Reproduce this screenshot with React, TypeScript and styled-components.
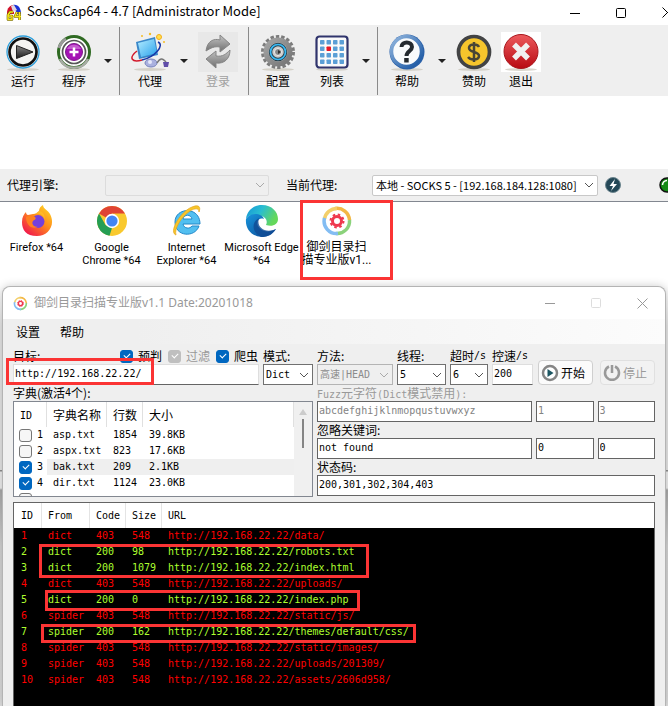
import React from "react";
import styled, { createGlobalStyle } from "styled-components";

const CJK = '"Noto Sans CJK SC", sans-serif';
const MONO = `"DejaVu Sans Mono", ${CJK}`;
const RED = "#fb3434";

const GlobalStyle = createGlobalStyle`
  *, *::before, *::after { box-sizing: border-box; }
  body { margin: 0; background: #fff; color: #000; font: 12px/16px "Noto Sans", ${CJK}; }
  button, input, select { font: inherit; color: inherit; margin: 0; }
  button { background: none; border: 0; padding: 0; }
  svg { display: block; flex: none; }
`;

const Desktop = styled.div`
  min-height: 100vh;
  display: flex;
  flex-direction: column;
  overflow: hidden;
`;

/* ---------- launcher window ---------- */

const Launcher = styled.section`
  width: calc(100% + 22px);
`;

const TitleBar = styled.header`
  height: 25px;
  display: flex;
  align-items: center;
  padding-left: 6px;
  gap: 5px;
`;

const Title = styled.h1`
  margin: 0;
  flex: 1;
  font-family: ${CJK};
  font-size: 13px;
  line-height: 20px;
  font-weight: 400;
  padding-bottom: 4px;
`;

const WindowButtons = styled.div`
  display: flex;
`;

const WindowButton = styled.button<{ $faint?: boolean }>`
  width: 46px;
  height: 18px;
  display: grid;
  place-items: center;
  color: ${(p) => (p.$faint ? "#ddd" : "inherit")};
`;

const Toolbar = styled.nav`
  height: 71px;
  background: #efefef;
  display: flex;
  align-items: center;
`;

const Tool = styled.button<{ $w: number; $muted?: boolean }>`
  width: ${(p) => p.$w}px;
  height: 62px;
  display: flex;
  flex-direction: column;
  align-items: center;
  padding-top: 2px;
  color: ${(p) => (p.$muted ? "#a0a0a0" : "#000")};
`;

const ToolLabel = styled.span`
  line-height: 18px;
  font-family: ${CJK};
`;

const Drop = styled.button<{ $w: number }>`
  width: ${(p) => p.$w}px;
  height: 62px;
  display: grid;
  place-items: center;
`;

const Divider = styled.i<{ $before?: number }>`
  width: 1px;
  height: 68px;
  margin-left: ${(p) => p.$before ?? 0}px;
  background: #8a8a8a;
`;

const ProxyBar = styled.div`
  margin-top: 73px;
  height: 33px;
  padding: 0 15px 0 7px;
  display: flex;
  align-items: center;
  background: #efefef;
  border-bottom: 1px solid #828790;
`;

const ProxyLabel = styled.label<{ $w: number; $indent?: number }>`
  width: ${(p) => p.$w}px;
  padding-left: ${(p) => p.$indent ?? 0}px;
  flex: none;
  font-family: ${CJK};
`;

const ComboBox = styled.div<{ $w: number; $disabled?: boolean }>`
  position: relative;
  width: ${(p) => p.$w}px;
  height: 21px;
  border: 1px solid ${(p) => (p.$disabled ? "#dcdcdc" : "#c8c8c8")};
  border-radius: 2px;
  background: ${(p) => (p.$disabled ? "#efefef" : "#fff")};
  & > svg { position: absolute; right: 3px; top: 6px; pointer-events: none; }
`;

const ComboSelect = styled.select`
  appearance: none;
  width: 100%;
  height: 100%;
  border: 0;
  background: none;
  padding: 0 14px 0 3px;
  font-family: ${CJK};
  font-size: 11px;
  white-space: nowrap;
`;

const StatusIcons = styled.div`
  flex: 1;
  margin-left: 7px;
  display: flex;
  justify-content: space-between;
`;

const AppList = styled.ul`
  margin: 0;
  padding: 0;
  list-style: none;
  height: 84px;
  display: flex;
`;

const AppItem = styled.li`
  position: relative;
  width: 75px;
  padding: 3px 2px 0 0;
  display: flex;
  flex-direction: column;
  align-items: center;
`;

const AppName = styled.span<{ $cjk?: boolean }>`
  margin-top: 4px;
  font-size: ${(p) => (p.$cjk ? 12 : 11)}px;
  line-height: 13px;
  font-family: "Roboto", ${CJK};
  text-align: center;
  white-space: pre;
`;

const Marker = styled.span<{ $x: number; $y: number; $w: number; $h: number }>`
  position: absolute;
  z-index: 2;
  left: ${(p) => p.$x}px;
  top: ${(p) => p.$y}px;
  width: ${(p) => p.$w}px;
  height: ${(p) => p.$h}px;
  border: 3px solid ${RED};
  pointer-events: none;
`;

/* ---------- scanner window ---------- */

const Backdrop = styled.div`
  flex: 1;
  display: flex;
  padding: 0 2px;
  background: linear-gradient(#fff 0, #e4e4e4 40px, #e4e4e4 184px, #8f8f8f 184px, #8f8f8f 185px, #ececec 186px, #ececec 202px, #a8a8a8 204px, #d2d2d2 260px, #dcdcdc 100%);
`;

const Scanner = styled.section`
  flex: 1;
  min-width: 0;
  display: flex;
  flex-direction: column;
  border: 1px solid #b4b4b4;
  border-bottom: 0;
  border-radius: 8px 8px 0 0;
  background: #efefef;
  box-shadow: 0 0 10px #0003;
`;

const ScannerTitle = styled.header`
  height: 32px;
  display: flex;
  align-items: center;
  gap: 6px;
  padding-left: 10px;
  border-radius: 8px 8px 0 0;
  background: #fff;
  color: #999;
`;

const ScannerName = styled.h2`
  flex: 1;
  margin: 0;
  font-size: 12px;
  font-weight: 400;
`;

const MenuBar = styled.nav`
  height: 25px;
  display: flex;
  gap: 20px;
  padding-left: 13px;
  background: linear-gradient(90deg, #efefef 20%, #fcfcfc);
  font-family: ${CJK};
`;

const Form = styled.form`
  flex: 1;
  display: flex;
  flex-direction: column;
  padding: 4px 10px 0 10px;
  font-family: ${CJK};
`;

const Controls = styled.div`
  display: flex;
  gap: 4px;
`;

const Field = styled.div<{ $w: number }>`
  position: relative;
  width: ${(p) => p.$w}px;
  flex: none;
  display: flex;
  flex-direction: column;
`;

const FieldHead = styled.div`
  display: flex;
  align-items: center;
  height: 16px;
  white-space: nowrap;
`;

const Checks = styled.div`
  flex: 1;
  display: flex;
  justify-content: flex-end;
  gap: 6px;
  padding-right: 1px;
`;

const Latin = styled.span`
  font-family: ${MONO};
  font-size: 10px;
`;

const CheckLabel = styled.label<{ $muted?: boolean }>`
  display: flex;
  align-items: center;
  gap: 5px;
  color: ${(p) => (p.$muted ? "#999" : "#000")};
`;

const Check = styled.input`
  appearance: none;
  position: relative;
  flex: none;
  width: 13px;
  height: 13px;
  border: 1px solid #767676;
  border-radius: 3px;
  background: #f6f6f6;
  &:checked { background: #0067c0; border-color: #0067c0; }
  &:checked:disabled { background: #bfbfbf; border-color: #bfbfbf; }
  &:checked::after {
    content: "";
    position: absolute;
    left: 3px;
    top: 2px;
    width: 6px;
    height: 4px;
    border: solid #fff;
    border-width: 0 0 1px 1px;
    transform: rotate(-45deg);
  }
`;

const TextBox = styled.input<{ $soft?: boolean }>`
  width: 100%;
  height: 21px;
  padding: 0 2px 2px 1px;
  border: 1px solid ${(p) => (p.$soft ? "#dedede" : "#646464")};
  border-bottom-color: #646464;
  border-radius: 0;
  background: #fff;
  font-family: ${MONO};
  font-size: 10px;
  &:disabled { color: #838383; }
`;

const Picker = styled.div<{ $muted?: boolean }>`
  position: relative;
  height: 21px;
  border: 1px solid ${(p) => (p.$muted ? "#b4b4b4" : "#707070")};
  background: ${(p) => (p.$muted ? "#efefef" : "#fff")};
  & > svg { position: absolute; right: 3px; top: 7px; pointer-events: none; }
`;

const PickerSelect = styled.select`
  appearance: none;
  width: 100%;
  height: 100%;
  border: 0;
  background: none;
  padding: 0 0 2px 2px;
  font-family: ${MONO};
  font-size: 10px;
  &:disabled { opacity: 1; color: #8c8c8c; }
`;

const Actions = styled.div`
  flex: 1;
  display: flex;
  justify-content: flex-end;
  gap: 7px;
  padding-top: 12px;
`;

const ActionButton = styled.button`
  width: 55px;
  height: 25px;
  display: flex;
  align-items: center;
  padding-left: 2px;
  gap: 2px;
  border: 1px solid #cfcfcf;
  border-radius: 4px;
  background: #fbfbfb;
  &:disabled { background: #f2f2f2; border-color: #e0e0e0; color: #9a9a9a; }
`;

const Panels = styled.div`
  display: flex;
  gap: 4px;
`;

const DictPanel = styled.div`
  width: 300px;
  flex: none;
`;

const DictBox = styled.div`
  height: 96px;
  display: flex;
  border: 1px solid #828790;
  background: #fff;
  overflow: hidden;
`;

const DictTable = styled.table`
  flex: 1;
  table-layout: fixed;
  border-collapse: separate;
  border-spacing: 0;
  align-self: flex-start;
  th, td { padding: 0 0 0 6px; text-align: left; font-weight: 400; white-space: nowrap; }
  th { height: 25px; border-right: 1px solid #e0e0e0; }
  td { height: 16px; font-family: ${MONO}; font-size: 10px; line-height: 16px; }
  td:first-child { padding-left: 5px; }
`;

const DictRow = styled.tr<{ $active?: boolean }>`
  background: ${(p) => (p.$active ? "#efefef" : "#fff")};
  td:first-child { background: #fff; }
`;

const Col = styled.col<{ $w?: number }>`
  width: ${(p) => (p.$w ? p.$w + "px" : "auto")};
`;

const RowCheck = styled.label`
  display: flex;
  align-items: center;
  gap: 5px;
`;

const Scrollbar = styled.div`
  width: 18px;
  background: #f0f0f0;
  display: flex;
  flex-direction: column;
  align-items: center;
  padding-top: 7px;
  gap: 4px;
`;

const Thumb = styled.i`
  width: 2px;
  height: 29px;
  background: #858585;
`;

const Filters = styled.div`
  flex: 1;
  min-width: 0;
  display: flex;
  flex-direction: column;
`;

const FilterRow = styled.div`
  display: grid;
  grid-template-columns: 215px 1fr 1fr;
  gap: 4px;
`;

const FilterLabel = styled.label<{ $muted?: boolean }>`
  height: 16px;
  color: ${(p) => (p.$muted ? "#999" : "#000")};
`;

const Log = styled.div`
  position: relative;
  flex: 1;
  min-height: 200px;
  margin-top: 5px;
  border: 1px solid #646464;
  border-bottom: 0;
  background: #000;
`;

const LogTable = styled.table`
  width: 100%;
  table-layout: fixed;
  border-collapse: separate;
  border-spacing: 0;
  font-family: ${MONO};
  font-size: 10px;
  line-height: 16px;
  th, td { padding: 0 0 0 7px; text-align: left; font-weight: 400; white-space: nowrap; }
  thead { background: #fff; }
  th { height: 25px; padding-left: 6px; border-left: 1px solid #e4e4e4; }
  th:first-child { border-left-color: #fff; }
  td { height: 16px; }
`;

const LogRow = styled.tr<{ $ok: boolean }>`
  color: ${(p) => (p.$ok ? "#adff2f" : "#ff0000")};
`;

/* ---------- icons ---------- */

const Chevron = ({ color = "#555" }: { color?: string }) => (
  <svg width="10" height="7" viewBox="0 0 10 7" fill="none" stroke={color}><path d="M1 1l4 4 4-4" /></svg>
);
const DropArrow = () => (
  <svg width="8" height="4" viewBox="0 0 8 4"><path d="M0 0h8L4 4z" fill="#222" /></svg>
);
const Minimize = () => (
  <svg width="10" height="10" viewBox="0 0 10 10" stroke="currentColor"><path d="M0 5.5h10" /></svg>
);
const Maximize = () => (
  <svg width="10" height="10" viewBox="0 0 10 10" fill="none" stroke="currentColor"><rect x=".5" y=".5" width="9" height="9" rx="1" /></svg>
);
const Close = () => (
  <svg width="11" height="11" viewBox="0 0 11 11" stroke="currentColor"><path d="M.5.5l10 10M10.500.5l-10 10" /></svg>
);
const Shadow = () => <ellipse cx="20" cy="37.500" rx="16" ry="1.500" fill="#c9c5b8" opacity=".7" />;

const SocksIcon = () => (
  <svg width="16" height="18" viewBox="0 0 16 18">
    <path d="M1 9C1 4 4 1 8 1v9H1z" fill="#d3122b" />
    <path d="M7 1c5-1 8 3 8 9h-4z" fill="#1730d8" />
    <path d="M5 2l3-1 3 5-4 2z" fill="#dfd5e0" />
    <g fill="none" strokeLinejoin="round">
      <path d="M7 8H4L2 11v4.500h4V12H2M11 8l-2 4.500h6M13.500 8v8" stroke="#695b00" strokeWidth="2.600" />
      <path d="M7 8H4L2 11v4.500h4V12H2M11 8l-2 4.500h6M13.500 8v8" stroke="#f5e51b" strokeWidth="1.500" />
    </g>
  </svg>
);

const RunIcon = () => (
  <svg width="40" height="40" viewBox="0 0 40 40">
    <defs><linearGradient id="run" x2="0" y2="1"><stop stopColor="#888" /><stop offset="1" stopColor="#1b1b1b" /></linearGradient></defs>
    <Shadow />
    <circle cx="20" cy="20" r="16" fill="#fff" stroke="#2d9fdb" strokeWidth="1.300" />
    <circle cx="20" cy="20" r="13.500" fill="#f4f4f2" stroke="#111" strokeWidth="2.700" />
    <path d="M13.500 13.500L30 20l-16.500 6.500z" fill="url(#run)" stroke="#222" />
  </svg>
);

const ProgramIcon = () => (
  <svg width="40" height="40" viewBox="0 0 40 40">
    <Shadow />
    <circle cx="20" cy="20" r="15.500" fill="#fff" stroke="#2f6a22" strokeWidth="3" />
    <path d="M5 16a15.500 15.500 0 0 1 7-9" stroke="#9a9a9a" strokeWidth="3" fill="none" />
    <path d="M6 27a15.500 15.500 0 0 0 28 0" stroke="#a9aca5" strokeWidth="2.500" fill="none" />
    <circle cx="20" cy="20" r="11.500" fill="#fff" stroke="#555" strokeWidth="1.700" />
    <circle cx="20" cy="20" r="8.500" fill="#a514b5" stroke="#7c168a" />
    <path d="M13 17a8 8 0 0 1 14 0z" fill="#c65bd0" />
    <path d="M20 15.500v9M15.500 20h9" stroke="#fff" strokeWidth="2.500" />
  </svg>
);

const ProxyIcon = () => (
  <svg width="40" height="40" viewBox="0 0 40 40">
    <defs><linearGradient id="screen" x1="0" y1="0" x2="1" y2="1"><stop stopColor="#b3ecff" /><stop offset="1" stopColor="#28a1ec" /></linearGradient></defs>
    <Shadow />
    <path d="M6 10l19-5 3 18-19 4z" fill="#3987c9" />
    <path d="M8 11l16-4 3 14-16 4z" fill="url(#screen)" />
    <ellipse cx="21" cy="31" rx="6" ry="4" fill="#aab1df" stroke="#7883bc" />
    <circle cx="20" cy="30" r="2" fill="#e5e8fa" />
    <path d="M27 31c4-7 7-3 9-1" stroke="#777" strokeWidth="1.500" fill="none" />
    <path d="M33 30h6l-1 5h-4z" fill="#604da8" />
    <path d="M28 10c7 3-3 15-16 18" stroke="#1736a6" strokeWidth="1.500" fill="none" />
    <path d="M7 19c-9 7-5 12 5 9" stroke="#d3192b" strokeWidth="1.500" fill="none" />
    <circle cx="29" cy="5" r="2.500" fill="#ffe052" stroke="#f4ae16" />
    <circle cx="20" cy="2" r="1.200" fill="#f6bd24" /><circle cx="12" cy="4" r="1" fill="#f6bd24" /><circle cx="34" cy="10" r="1" fill="#f6bd24" />
  </svg>
);

const LoginIcon = () => (
  <svg width="40" height="40" viewBox="0 0 40 40">
    <defs><linearGradient id="sync" x2="0" y2="1"><stop stopColor="#c4c4c4" /><stop offset="1" stopColor="#6e6e6e" /></linearGradient></defs>
    <rect width="40" height="40" fill="#e8e8e8" />
    <path d="M8 19C9 9 16 6 22 8V3l10 9-10 8v-5c-6-1-9 1-14 4z" fill="url(#sync)" stroke="#858585" />
    <path d="M32 18c0 9-6 14-14 13v5L8 27l10-8v5c7 1 10-2 14-6z" fill="url(#sync)" stroke="#858585" />
  </svg>
);

const ConfigIcon = () => (
  <svg width="40" height="40" viewBox="0 0 40 40">
    <defs><linearGradient id="gear" x2="1" y2="1"><stop stopColor="#aaa" /><stop offset="1" stopColor="#707070" /></linearGradient></defs>
    <Shadow />
    <circle cx="20" cy="20" r="15" fill="none" stroke="#7c7c7c" strokeWidth="4" strokeDasharray="3.300 1.940" />
    <circle cx="20" cy="20" r="14.500" fill="url(#gear)" />
    <circle cx="20" cy="20" r="9.500" fill="#c4c4c4" />
    <circle cx="20" cy="20" r="7.500" fill="#ccc" stroke="#28404c" strokeWidth="3.500" />
    <circle cx="20" cy="20" r="7.500" fill="none" stroke="#38b9f4" strokeWidth="1.700" />
    <circle cx="20" cy="20" r="3.500" fill="#888" stroke="#eee" />
    <path d="M20 18v4l3-2z" fill="#333" />
  </svg>
);

const ListIcon = () => (
  <svg width="40" height="40" viewBox="0 0 40 40">
    <Shadow />
    <rect x="4.500" y="4.500" width="31" height="31" rx="3" fill="#fafafa" stroke="#30346c" strokeWidth="2.200" />
    {[0, 1, 2, 3].flatMap((r) => [0, 1, 2, 3].map((c) => (
      <rect key={`${r}${c}`} x={8 + c * 6.5} y={8 + r * 6.5} width="4.500" height="4.500" rx=".7" fill={r === 1 && c === 1 ? "#e81623" : "#5b9fd6"} />
    )))}
  </svg>
);

const HelpIcon = () => (
  <svg width="40" height="40" viewBox="0 0 40 40">
    <defs><linearGradient id="help" x2="1" y2="1"><stop stopColor="#93b7df" /><stop offset="1" stopColor="#1553a0" /></linearGradient></defs>
    <Shadow />
    <circle cx="20" cy="20" r="17.500" fill="#2a61a9" />
    <circle cx="19.500" cy="19.500" r="15" fill="#f9fbfc" stroke="url(#help)" strokeWidth="3.500" />
    <path d="M14.500 15c0-6 10.500-6 10.500 0 0 4-5.500 4-5.500 9" fill="none" stroke="#252b30" strokeWidth="4" />
    <rect x="17.200" y="26" width="4.500" height="4.500" fill="#252b30" />
  </svg>
);

const DonateIcon = () => (
  <svg width="40" height="40" viewBox="0 0 40 40">
    <Shadow />
    <circle cx="20" cy="20" r="15.500" fill="#f6c52c" stroke="#424344" strokeWidth="3.700" />
    <path d="M25 15c-2-4-10-3-10 1 0 5 10 3 10 8 0 4-8 5-11 1M20 10v20" fill="none" stroke="#494535" strokeWidth="2.500" />
  </svg>
);

const ExitIcon = () => (
  <svg width="40" height="40" viewBox="0 0 40 40">
    <defs><linearGradient id="exit" x2="0" y2="1"><stop stopColor="#ed5a5d" /><stop offset="1" stopColor="#b80a12" /></linearGradient></defs>
    <rect width="40" height="40" fill="#fff" /><Shadow />
    <circle cx="20" cy="19.500" r="17" fill="url(#exit)" stroke="#a8161c" />
    <path d="M13 12.500l14 14M27 12.500l-14 14" stroke="#f1f1f1" strokeWidth="5.500" />
  </svg>
);

const FirefoxIcon = () => (
  <svg width="32" height="32" viewBox="0 0 32 32">
    <defs><linearGradient id="fox" x1="1" x2=".2" y2="1"><stop stopColor="#ffe226" /><stop offset=".5" stopColor="#ff8a1c" /><stop offset="1" stopColor="#f0134e" /></linearGradient></defs>
    <path d="M1 17c0-5 2-8 4-10 0 2 1 3 2 3l5-1c3 0 5-1 6-3 0-3 2-5 4-6 0 4 5 5 7 9 6 11-2 22-13 22S1 25 1 17z" fill="url(#fox)" />
    <circle cx="17" cy="16.500" r="6.500" fill="#7440dc" />
    <path d="M5 12c5-2 7-1 9 0 2 2-1 3-2 4-2 3 1 6 5 6-7 3-12-3-12-10z" fill="#ff8020" />
    <path d="M14 9c5-1 9 1 10 6 0-6-3-9-6-9z" fill="#ffb928" />
  </svg>
);

const ChromeIcon = () => (
  <svg width="32" height="32" viewBox="0 0 32 32">
    <circle cx="16" cy="16" r="15" fill="#f9c92e" />
    <path d="M16 16L3 8.500A15 15 0 0 1 29 8.500H16z" fill="#df4334" />
    <path d="M3 8.500L9.500 20 16 23l-2.500 7.800A15 15 0 0 1 3 8.500z" fill="#259e54" />
    <circle cx="16" cy="16" r="7.200" fill="#fff" /><circle cx="16" cy="16" r="5.600" fill="#4285f4" />
  </svg>
);

const IeIcon = () => (
  <svg width="32" height="32" viewBox="0 0 32 32">
    <path d="M29 19H12c1 5 7 5 9 2h7C24 33 4 32 4 17S29 1 29 19z" fill="#52bff0" stroke="#2388c8" />
    <path d="M12 14h9c-1-5-8-5-9 0z" fill="#fff" stroke="#218bcc" />
    <path d="M5 30C-3 27 10 6 21 2c7-3 9 0 7 5 0-4-4-4-9-1C10 12 3 24 5 30z" fill="#f8c52b" stroke="#e3a61d" strokeWidth=".7" />
  </svg>
);

const EdgeIcon = () => (
  <svg width="34" height="32" viewBox="0 0 34 32">
    <defs>
      <linearGradient id="edgeTop" x2="1" y2=".4"><stop stopColor="#1594d7" /><stop offset=".5" stopColor="#29bdd1" /><stop offset="1" stopColor="#64d85b" /></linearGradient>
      <linearGradient id="edgeLow" x2="1" y2="1"><stop stopColor="#1795dc" /><stop offset="1" stopColor="#0c4692" /></linearGradient>
    </defs>
    <path d="M1 14C2 5 9 0 17 0c10 0 16 7 16 14 0 6-6 8-12 6 2-4 0-8-5-9-6-2-12-2-15 3z" fill="url(#edgeTop)" />
    <path d="M1 14c4-7 16-6 18 0-5-2-8 3-6 7 3 6 11 7 18 3-4 6-9 8-15 8C6 31 0 23 1 14z" fill="url(#edgeLow)" />
    <path d="M14 13c-9 5-6 16 3 19 6 0 11-3 14-8-11 5-20-2-17-11z" fill="#104b94" opacity=".8" />
  </svg>
);

const ScannerIcon = ({ size }: { size: number }) => (
  <svg width={size} height={size} viewBox="0 0 32 32" fill="none">
    <g strokeWidth="3.500">
      <path d="M14 3.500A12.500 12.500 0 0 1 28.500 15" stroke="#f3b845" />
      <path d="M3.500 14A12.500 12.500 0 0 1 16 3.500" stroke="#f3cf6a" />
      <path d="M28.500 15A12.500 12.500 0 0 1 15 28.500" stroke="#8bd27b" />
      <path d="M17 28.500A12.500 12.500 0 0 1 3.500 13" stroke="#83bdf3" />
    </g>
    <circle cx="16" cy="16" r="4.500" stroke="#ef394e" strokeWidth="3" />
    <circle cx="16" cy="16" r="6.500" stroke="#ef394e" strokeWidth="2" strokeDasharray="2.500 2.600" />
  </svg>
);

const BoltIcon = () => (
  <svg width="16" height="16" viewBox="0 0 16 16">
    <circle cx="8" cy="8" r="7.500" fill="#244857" stroke="#6c858e" /><path d="M10 2L4.500 9H8l-2 5 6-7H8.500z" fill="#fff" />
  </svg>
);

const GreenLight = () => (
  <svg width="16" height="16" viewBox="0 0 16 16">
    <circle cx="8" cy="8" r="7" fill="#168a16" stroke="#111" strokeWidth="1.500" /><path d="M3.500 8A4.500 4.500 0 0 1 8 3.500" stroke="#fff" fill="none" strokeWidth="1.500" />
  </svg>
);

const StartIcon = () => (
  <svg width="18" height="18" viewBox="0 0 18 18">
    <circle cx="9" cy="9" r="7" fill="#fff" stroke="#858585" strokeWidth="2.500" /><path d="M6.500 5l6 4-6 4z" fill="#1c5662" />
  </svg>
);

const StopIcon = () => (
  <svg width="18" height="18" viewBox="0 0 18 18" fill="none" stroke="#999" strokeWidth="2.500">
    <path d="M6 2.500a7 7 0 1 0 6 0M9 1v8" />
  </svg>
);

/* ---------- data ---------- */

const apps = [
  { name: "Firefox *64", icon: <FirefoxIcon /> },
  { name: "Google\nChrome *64", icon: <ChromeIcon /> },
  { name: "Internet\nExplorer *64", icon: <IeIcon /> },
  { name: "Microsoft Edge\n*64", icon: <EdgeIcon /> },
];

const dicts = [
  { id: 1, name: "asp.txt", lines: 1854, size: "39.8KB", on: false },
  { id: 2, name: "aspx.txt", lines: 823, size: "17.6KB", on: false },
  { id: 3, name: "bak.txt", lines: 209, size: "2.1KB", on: true },
  { id: 4, name: "dir.txt", lines: 1124, size: "23.0KB", on: true },
];

const HOST = "http://192.168.22.22/";
const results: [string, number, number, string][] = [
  ["dict", 403, 548, "data/"],
  ["dict", 200, 98, "robots.txt"],
  ["dict", 200, 1079, "index.html"],
  ["dict", 403, 548, "uploads/"],
  ["dict", 200, 0, "index.php"],
  ["spider", 403, 548, "static/js/"],
  ["spider", 200, 162, "themes/default/css/"],
  ["spider", 403, 548, "static/images/"],
  ["spider", 403, 548, "uploads/201309/"],
  ["spider", 403, 548, "assets/2606d958/"],
];

const WindowControls = ({ fixedSize }: { fixedSize?: boolean }) => (
  <WindowButtons>
    <WindowButton aria-label="Minimize"><Minimize /></WindowButton>
    <WindowButton aria-label="Maximize" disabled={fixedSize} $faint={fixedSize}><Maximize /></WindowButton>
    <WindowButton aria-label="Close"><Close /></WindowButton>
  </WindowButtons>
);

type PickProps = { id: string; label: React.ReactNode; value: string; w: number; disabled?: boolean };
const PickField = ({ id, label, value, w, disabled }: PickProps) => (
  <Field $w={w}>
    <FieldHead as="label" htmlFor={id}>{label}</FieldHead>
    <Picker $muted={disabled}>
      <PickerSelect id={id} disabled={disabled}><option>{value}</option></PickerSelect>
      <Chevron color={disabled ? "#aaa" : "#555"} />
    </Picker>
  </Field>
);

export default function App() {
  return (
    <Desktop>
      <GlobalStyle />
      <Launcher>
        <TitleBar>
          <SocksIcon />
          <Title>SocksCap64 - 4.7 [Administrator Mode]</Title>
          <WindowControls />
        </TitleBar>
        <Toolbar>
          <Tool $w={46}><RunIcon /><ToolLabel>运行</ToolLabel></Tool>
          <Tool $w={56}><ProgramIcon /><ToolLabel>程序</ToolLabel></Tool>
          <Drop $w={12} aria-label="程序菜单"><DropArrow /></Drop>
          <Divider $before={5} />
          <Tool $w={60}><ProxyIcon /><ToolLabel>代理</ToolLabel></Tool>
          <Drop $w={8} aria-label="代理菜单"><DropArrow /></Drop>
          <Tool $w={60} $muted disabled><LoginIcon /><ToolLabel>登录</ToolLabel></Tool>
          <Divider />
          <Tool $w={58}><ConfigIcon /><ToolLabel>配置</ToolLabel></Tool>
          <Tool $w={50}><ListIcon /><ToolLabel>列表</ToolLabel></Tool>
          <Drop $w={18} aria-label="列表菜单"><DropArrow /></Drop>
          <Divider $before={2} />
          <Tool $w={58}><HelpIcon /><ToolLabel>帮助</ToolLabel></Tool>
          <Drop $w={12} aria-label="帮助菜单"><DropArrow /></Drop>
          <Tool $w={52}><DonateIcon /><ToolLabel>赞助</ToolLabel></Tool>
          <Tool $w={42}><ExitIcon /><ToolLabel>退出</ToolLabel></Tool>
        </Toolbar>
        <ProxyBar>
          <ProxyLabel $w={98} htmlFor="engine">代理引擎:</ProxyLabel>
          <ComboBox $w={164} $disabled>
            <ComboSelect id="engine" disabled /><Chevron color="#aaa" />
          </ComboBox>
          <ProxyLabel $w={103} $indent={17} htmlFor="proxy">当前代理:</ProxyLabel>
          <ComboBox $w={226}>
            <ComboSelect id="proxy"><option>本地 - SOCKS 5 - [192.168.184.128:1080]</option></ComboSelect>
            <Chevron />
          </ComboBox>
          <StatusIcons><BoltIcon /><GreenLight /></StatusIcons>
        </ProxyBar>
        <AppList>
          {apps.map((a) => (
            <AppItem key={a.name}>{a.icon}<AppName>{a.name}</AppName></AppItem>
          ))}
          <AppItem>
            <ScannerIcon size={32} />
            <AppName $cjk>{"御剑目录扫\n描专业版v1..."}</AppName>
            <Marker $x={0} $y={-2} $w={93} $h={80} />
          </AppItem>
        </AppList>
      </Launcher>

      <Backdrop>
        <Scanner>
          <ScannerTitle>
            <ScannerIcon size={15} />
            <ScannerName>御剑目录扫描专业版v1.1 Date:20201018</ScannerName>
            <WindowControls fixedSize />
          </ScannerTitle>
          <MenuBar><button>设置</button><button>帮助</button></MenuBar>
          <Form onSubmit={(e) => e.preventDefault()}>
            <Controls>
              <Field $w={246}>
                <FieldHead>
                  <label htmlFor="target">目标:</label>
                  <Checks>
                    <CheckLabel><Check type="checkbox" defaultChecked />预判</CheckLabel>
                    <CheckLabel $muted><Check type="checkbox" defaultChecked disabled />过滤</CheckLabel>
                    <CheckLabel><Check type="checkbox" defaultChecked />爬虫</CheckLabel>
                  </Checks>
                </FieldHead>
                <TextBox id="target" $soft defaultValue={HOST} />
                <Marker $x={-7} $y={10} $w={148} $h={27} />
              </Field>
              <PickField id="mode" label="模式:" value="Dict" w={50} />
              <PickField id="method" label="方法:" value="高速|HEAD" w={76} disabled />
              <PickField id="threads" label="线程:" value="5" w={49} />
              <PickField id="timeout" label={<>超时<Latin>/s</Latin></>} value="6" w={38} />
              <Field $w={41}>
                <FieldHead as="label" htmlFor="rate">控速<Latin>/s</Latin></FieldHead>
                <TextBox id="rate" $soft defaultValue="200" />
              </Field>
              <Actions>
                <ActionButton type="submit"><StartIcon />开始</ActionButton>
                <ActionButton type="button" disabled><StopIcon />停止</ActionButton>
              </Actions>
            </Controls>

            <Panels>
              <DictPanel>
                <FieldHead>字典(激活<Latin>4</Latin>个):</FieldHead>
                <DictBox>
                  <DictTable>
                    <colgroup><Col $w={33} /><Col $w={60} /><Col $w={36} /><Col /></colgroup>
                    <thead>
                      <tr><th><Latin>ID</Latin></th><th>字典名称</th><th>行数</th><th>大小</th></tr>
                    </thead>
                    <tbody>
                      {dicts.map((d) => (
                        <DictRow key={d.id} $active={d.id === 3}>
                          <td><RowCheck><Check type="checkbox" defaultChecked={d.on} />{d.id}</RowCheck></td>
                          <td>{d.name}</td><td>{d.lines}</td><td>{d.size}</td>
                        </DictRow>
                      ))}
                      <DictRow>
                        <td colSpan={4}><RowCheck><Check type="checkbox" aria-label="5" /></RowCheck></td>
                      </DictRow>
                    </tbody>
                  </DictTable>
                  <Scrollbar>
                    <svg width="8" height="6" viewBox="0 0 8 6"><path d="M4 0l4 6H0z" fill="#ccc" /></svg>
                    <Thumb />
                  </Scrollbar>
                </DictBox>
              </DictPanel>
              <Filters>
                <FilterLabel $muted htmlFor="fuzz"><Latin>Fuzz</Latin>元字符<Latin>(Dict</Latin>模式禁用<Latin>):</Latin></FilterLabel>
                <FilterRow>
                  <TextBox id="fuzz" disabled defaultValue="abcdefghijklnmopqustuvwxyz" />
                  <TextBox aria-label="最小长度" disabled defaultValue="1" />
                  <TextBox aria-label="最大长度" disabled defaultValue="3" />
                </FilterRow>
                <FilterLabel htmlFor="ignore">忽略关键词:</FilterLabel>
                <FilterRow>
                  <TextBox id="ignore" defaultValue="not found" />
                  <TextBox aria-label="忽略下限" defaultValue="0" />
                  <TextBox aria-label="忽略上限" defaultValue="0" />
                </FilterRow>
                <FilterLabel htmlFor="status">状态码:</FilterLabel>
                <TextBox id="status" defaultValue="200,301,302,304,403" />
              </Filters>
            </Panels>

            <Log>
              <LogTable>
                <colgroup><Col $w={27} /><Col $w={48} /><Col $w={36} /><Col $w={36} /><Col /></colgroup>
                <thead><tr><th>ID</th><th>From</th><th>Code</th><th>Size</th><th>URL</th></tr></thead>
                <tbody>
                  {results.map(([from, code, size, path], i) => (
                    <LogRow key={path} $ok={code === 200}>
                      <td>{i + 1}</td><td>{from}</td><td>{code}</td><td>{size}</td><td>{HOST + path}</td>
                    </LogRow>
                  ))}
                </tbody>
              </LogTable>
              <Marker $x={25} $y={41} $w={330} $h={34} />
              <Marker $x={31} $y={87} $w={315} $h={21} />
              <Marker $x={27} $y={121} $w={375} $h={19} />
            </Log>
          </Form>
        </Scanner>
      </Backdrop>
    </Desktop>
  );
}
